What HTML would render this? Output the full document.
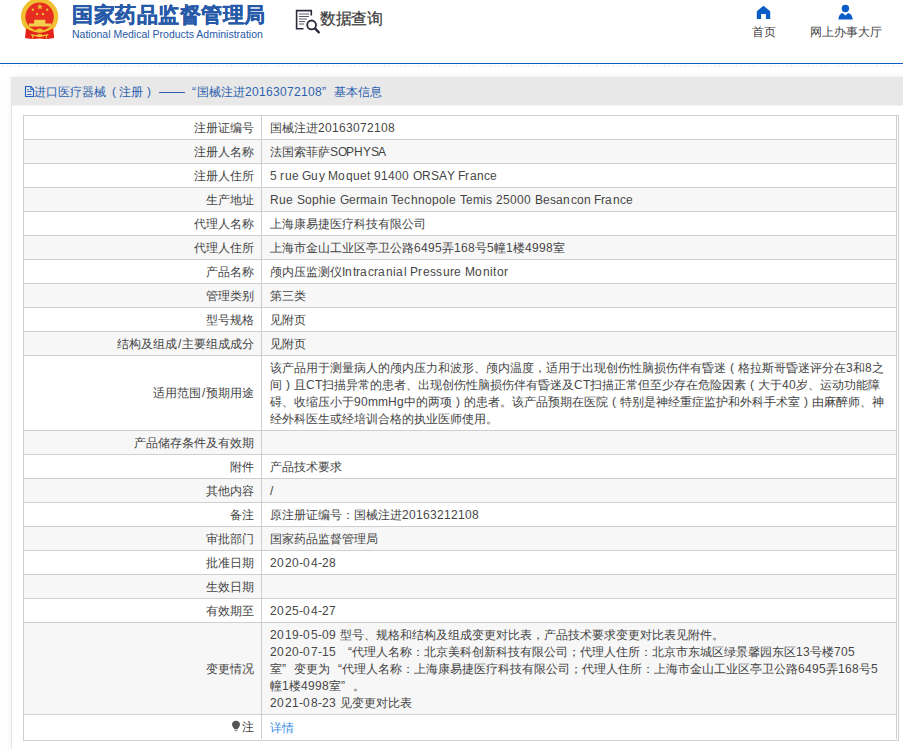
<!DOCTYPE html>
<html><head><meta charset="utf-8">
<style>
@font-face{font-family:"LatinS";src:local("Liberation Sans");size-adjust:104%;}
html,body{margin:0;padding:0;}
body{width:903px;height:749px;overflow:hidden;background:#fff;position:relative;font-family:"LatinS","Liberation Sans",sans-serif;font-size:12px;color:#444;}
.abs{position:absolute;white-space:nowrap;}
#bline{left:0;top:63px;width:903px;height:1px;background:#0b5ec4;}
#dash{left:0;top:65px;width:903px;height:2px;background:repeating-linear-gradient(135deg,#fff 0,#fff 2px,#e4e4e4 2px,#e4e4e4 3px);opacity:.6}
#panel{left:11px;top:77px;width:900px;height:700px;border-left:1px solid #e6e6e6;box-shadow:0 0 6px rgba(0,0,0,.07);background:#fff;}
#phead{left:0;top:0;width:900px;height:28px;background:#e8e8e8;border-bottom:1px solid #eef1f6;}
.tt{top:84.5px;color:#2b5fae;font-size:12px;line-height:14px;}
.lat{font-family:"LatinS","Liberation Sans",sans-serif;}
#tbox{left:23px;top:115px;width:874px;height:624px;border:1px solid #cfcfcf;}
table{position:absolute;left:0;top:0;border-collapse:collapse;table-layout:fixed;width:873px;}
td{border-right:1px solid #cfcfcf;border-bottom:1px solid #cfcfcf;padding:3.5px 0 2.5px;line-height:17px;vertical-align:middle;white-space:nowrap;overflow:hidden;}
td.l{width:230px;text-align:right;padding-right:7px;}
td.v{padding-left:8px;}
.dt{letter-spacing:0.25px}
.pc{display:inline-block;width:12px;text-align:center}
.lq{display:inline-block;width:12px;text-align:right}
.rq{display:inline-block;width:12px;text-align:left}
tr.g td{background:#f7f7f7;}
tr.last td{border-bottom:none;height:18px;}
a{color:#3b8ee6;text-decoration:none;}
</style></head><body>

<!-- emblem -->
<svg class="abs" style="left:0;top:0" width="70" height="45" viewBox="0 0 70 45">
  <circle cx="39.6" cy="16.6" r="18.7" fill="#f1bf32"/>
  <circle cx="39.6" cy="16.8" r="14.2" fill="#e62d1f"/>
  <path d="M26 28.2 L25 38 Q32 39.4 39.6 38.6 Q47 39.4 54.2 38 L53.2 28.2 Q39.6 35 26 28.2Z" fill="#e3231a"/>
  <path d="M25.6 26.6 Q39.6 37 53.6 26.6" fill="none" stroke="#f3c12e" stroke-width="1.9"/>
  <path d="M34.2 19.8 H45.4 V23.8 H34.2Z M28.9 23.6 H51 V26.4 H28.9Z" fill="#f4cf4c"/>
  <ellipse cx="39.6" cy="30.4" rx="3.4" ry="1.9" fill="#f3c12e"/>
  <path d="M31 34.6 Q39.6 37.4 48.3 34.6" fill="none" stroke="#f2c43a" stroke-width="1.4"/>
  <ellipse cx="39.6" cy="35.6" rx="3" ry="1.5" fill="#f2c43a"/>
  <path d="M32.6 35 L32.9 38.4 M46.6 35 L46.3 38.4" stroke="#f2c43a" stroke-width="1.2"/>
  <g fill="#e9b93a">
    <polygon points="39.9,3.6 40.8,5.8 43.1,5.9 41.3,7.3 41.9,9.6 39.9,8.3 37.9,9.6 38.5,7.3 36.7,5.9 39,5.8"/>
    <circle cx="32.9" cy="9.8" r="1.2"/><circle cx="47.2" cy="9.8" r="1.2"/>
    <circle cx="37.1" cy="14" r="1.2"/><circle cx="43" cy="14" r="1.2"/>
  </g>
</svg>
<div class="abs" style="left:72px;top:1.5px;font-size:21px;letter-spacing:0.5px;font-weight:bold;-webkit-text-stroke:0.35px #2659a8;color:#2659a8;line-height:26px;">国家药品监督管理局</div>
<div class="abs" style="left:72px;top:28px;font-size:10.5px;color:#2659a8;line-height:12px;font-family:'Liberation Sans',sans-serif;">National Medical Products Administration</div>

<!-- data query -->
<svg class="abs" style="left:294px;top:8px" width="28" height="28" viewBox="0 0 28 28">
  <path d="M17.3 7.5 V2.6 H2.6 V20.8 H9.5" fill="none" stroke="#2b2b3d" stroke-width="1.6"/>
  <path d="M5 6 H15 M5 8.5 H15 M5 11 H13 M5 13.5 H11 M5 16 H10" stroke="#5a5a6a" stroke-width="1"/>
  <circle cx="17.6" cy="16.9" r="4.4" fill="none" stroke="#2b2b3d" stroke-width="1.8"/>
  <path d="M21 20.4 L24.8 24.4" stroke="#2b2b3d" stroke-width="2.3" stroke-linecap="round"/>
</svg>
<div class="abs" style="left:320px;top:7px;font-size:16px;color:#3a3a3a;line-height:24px;letter-spacing:-0.3px;-webkit-text-stroke:0.2px #3a3a3a">数据查询</div>

<!-- right nav -->
<svg class="abs" style="left:756px;top:5px" width="15" height="15" viewBox="0 0 15 15">
  <path d="M7.5 0.7 L14.2 6.2 V13.9 H9.9 V9.1 H5.1 V13.9 H0.8 V6.2 Z" fill="#0a5cc6"/>
</svg>
<div class="abs" style="left:751.5px;top:24px;font-size:12px;color:#444;line-height:16px;">首页</div>
<svg class="abs" style="left:837px;top:4px" width="17" height="16" viewBox="0 0 17 16">
  <circle cx="8.4" cy="4.5" r="3.7" fill="#0a5cc6"/>
  <path d="M1.4 15.4 Q1.8 10 5.6 9 L8.4 11.4 L11.2 9 Q15 10 15.8 15.4 Z" fill="#0a5cc6"/>
</svg>
<div class="abs" style="left:810px;top:24px;font-size:12px;color:#444;line-height:16px;">网上办事大厅</div>

<div class="abs" id="bline"></div>
<div class="abs" id="dash"></div>

<div class="abs" id="panel">
  <div class="abs" id="phead"></div>
</div>
<svg class="abs" style="left:24px;top:85px" width="11" height="13" viewBox="0 0 11 13">
  <path d="M1.5 1.5 H7 L9.5 4.3 V11.5 H1.5 Z" fill="none" stroke="#1f5fc8" stroke-width="1.1" stroke-linejoin="round"/>
  <path d="M6.8 1.8 V4.6 H9.3" fill="none" stroke="#1f5fc8" stroke-width="1"/>
  <path d="M3.2 4.5 H4.8 M3.2 6.5 H7.5 M3.2 9.5 H7.5" stroke="#3a68c8" stroke-width="1"/>
</svg>
<div class="abs tt" style="left:34px">进口医疗器械</div>
<div class="abs tt lat" style="left:111.5px">(</div>
<div class="abs tt" style="left:118.5px">注册</div>
<div class="abs tt lat" style="left:146.5px">)</div>
<div class="abs" style="left:159px;top:92px;width:26px;height:1px;background:#2b5fae"></div>
<div class="abs tt lat" style="left:191.5px">&ldquo;</div>
<div class="abs tt" style="left:197px">国械注进<span class="lat">20163072108</span></div>
<div class="abs tt lat" style="left:322px">&rdquo;</div>
<div class="abs tt" style="left:334px">基本信息</div>
</div>

<div class="abs" id="tbox">
<table>
<tr><td class="l">注册证编号</td><td class="v">国械注进20163072108</td></tr>
<tr class="g"><td class="l">注册人名称</td><td class="v">法国索菲萨<span style="letter-spacing:-0.28px">SOPHYSA</span></td></tr>
<tr><td class="l">注册人住所</td><td class="v"><span style="letter-spacing:0.21px">5 rue Guy Moquet 91400 ORSAY France</span></td></tr>
<tr class="g"><td class="l">生产地址</td><td class="v"><span style="letter-spacing:0.16px">Rue Sophie Germain Technopole Temis 25000 Besancon France</span></td></tr>
<tr><td class="l">代理人名称</td><td class="v">上海康易捷医疗科技有限公司</td></tr>
<tr class="g"><td class="l">代理人住所</td><td class="v">上海市金山工业区亭卫公路6495弄168号5幢1楼4998室</td></tr>
<tr><td class="l">产品名称</td><td class="v">颅内压监测仪<span style="letter-spacing:0.32px">Intracranial Pressure Monitor</span></td></tr>
<tr class="g"><td class="l">管理类别</td><td class="v">第三类</td></tr>
<tr><td class="l">型号规格</td><td class="v">见附页</td></tr>
<tr class="g"><td class="l">结构及组成<span style="margin:0 1px">/</span>主要组成成分</td><td class="v">见附页</td></tr>
<tr><td class="l">适用范围<span style="margin:0 1px">/</span>预期用途</td><td class="v">该产品用于测量病人的颅内压力和波形、颅内温度，适用于出现创伤性脑损伤伴有昏迷<span class="pc">(</span>格拉斯哥昏迷评分在3和8之<br>间<span class="pc">)</span>且CT扫描异常的患者、出现创伤性脑损伤伴有昏迷及CT扫描正常但至少存在危险因素<span class="pc">(</span>大于40岁、运动功能障<br>碍、收缩压小于90mmHg中的两项<span class="pc">)</span>的患者。该产品预期在医院<span class="pc">(</span>特别是神经重症监护和外科手术室<span class="pc">)</span>由麻醉师、神<br>经外科医生或经培训合格的执业医师使用。</td></tr>
<tr class="g"><td class="l">产品储存条件及有效期</td><td class="v">&nbsp;</td></tr>
<tr><td class="l">附件</td><td class="v">产品技术要求</td></tr>
<tr class="g"><td class="l">其他内容</td><td class="v">/</td></tr>
<tr><td class="l">备注</td><td class="v">原注册证编号：国械注进20163212108</td></tr>
<tr class="g"><td class="l">审批部门</td><td class="v">国家药品监督管理局</td></tr>
<tr><td class="l">批准日期</td><td class="v"><span class="dt">2020-04-28</span></td></tr>
<tr class="g"><td class="l">生效日期</td><td class="v">&nbsp;</td></tr>
<tr><td class="l">有效期至</td><td class="v"><span class="dt">2025-04-27</span></td></tr>
<tr class="g"><td class="l">变更情况</td><td class="v"><span class="dt">2019-05-09</span> 型号、规格和结构及组成变更对比表，产品技术要求变更对比表见附件。<br><span class="dt">2020-07-15</span> <span class="lq">“</span>代理人名称：北京美科创新科技有限公司；代理人住所：北京市东城区绿景馨园东区13号楼705<br>室<span class="rq">”</span>变更为<span class="lq">“</span>代理人名称：上海康易捷医疗科技有限公司；代理人住所：上海市金山工业区亭卫公路6495弄168号5<br>幢1楼4998室<span class="rq">”</span>。<br><span class="dt">2021-08-23</span> 见变更对比表</td></tr>
<tr class="last"><td class="l"><svg width="10" height="12" viewBox="0 0 10 12" style="vertical-align:-1px;margin-right:1px"><path d="M5 0.8 C7.6 0.8 9 2.6 9 4.6 C9 6.6 7.4 7.6 6.6 9.2 H3.4 C2.6 7.6 1 6.6 1 4.6 C1 2.6 2.4 0.8 5 0.8Z" fill="#555"/><path d="M3.6 10.2h2.8v1h-2.8z" fill="#777"/></svg>注</td><td class="v"><a style="position:relative;top:1px">详情</a></td></tr>
</table>
</div>

</body></html>
